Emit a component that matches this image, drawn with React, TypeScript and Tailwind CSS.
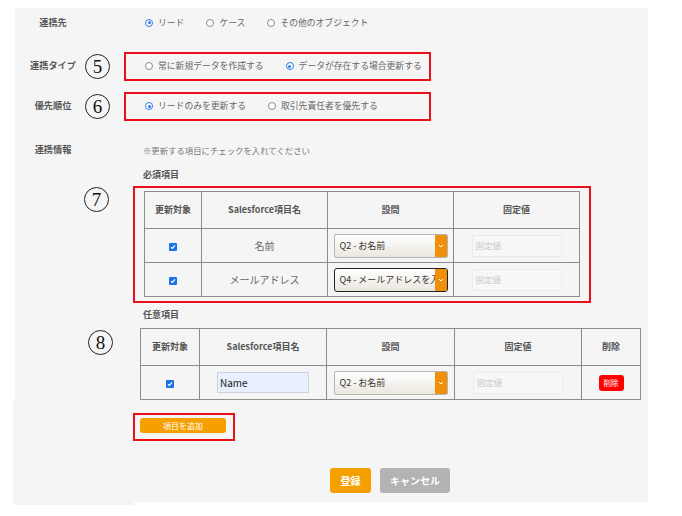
import React from "react";

function Radio({ checked }: { checked?: boolean }) {
  return checked ? (
    <span className="w-[8px] h-[8px] rounded-full border-[1.5px] border-[#2a7be4] bg-white flex items-center justify-center shrink-0">
      <span className="w-[3px] h-[3px] rounded-full bg-[#2a7be4]" />
    </span>
  ) : (
    <span className="w-[8px] h-[8px] rounded-full border border-[#8a8a8a] bg-white shrink-0" />
  );
}

function Opt({ checked, label }: { checked?: boolean; label: string }) {
  return (
    <span className="flex items-center gap-[5px] whitespace-nowrap">
      <Radio checked={checked} />
      <span>{label}</span>
    </span>
  );
}

function Num({ n }: { n: string }) {
  return (
    <div className="w-[25px] h-[25px] rounded-full border-[1.5px] border-[#222] flex items-center justify-center font-['Liberation_Serif',serif] text-[19px] leading-none text-[#111]">
      {n}
    </div>
  );
}

function Check() {
  return (
    <span className="w-[8px] h-[8px] rounded-[1px] bg-[#1a73e8] inline-flex items-center justify-center">
      <svg width="6" height="6" viewBox="0 0 6 6">
        <path d="M1 3.2 L2.4 4.5 L5 1.4" stroke="white" strokeWidth="1.2" fill="none" />
      </svg>
    </span>
  );
}

function Sel({ text, focused }: { text: string; focused?: boolean }) {
  return (
    <div
      className={
        focused
          ? "mx-auto w-[114px] h-[24px] rounded-[3px] border-[1.5px] border-[#222] bg-linear-to-b from-white to-[#ebe7df] flex items-stretch overflow-hidden"
          : "mx-auto w-[114px] h-[24px] rounded-[2px] border border-[#b5b5b5] bg-linear-to-b from-white to-[#ebe7df] flex items-stretch overflow-hidden"
      }
    >
      <span className="flex-1 min-w-0 flex items-center pl-[5px] text-[9px] text-[#333] whitespace-nowrap overflow-hidden">
        {text}
      </span>
      <span className="w-[12px] bg-[#f0900a] flex items-center justify-center shrink-0">
        <svg width="6" height="4" viewBox="0 0 6 4">
          <path d="M1 1 L3 3 L5 1" stroke="white" strokeWidth="1" fill="none" />
        </svg>
      </span>
    </div>
  );
}

function Fixed() {
  return (
    <div className="mx-auto w-[90px] h-[22px] bg-[#f7f7f7] border border-[#ebebeb] flex items-center pl-[3px] text-[8.5px] text-[#c8c8c8]">
      固定値
    </div>
  );
}

const th = "border border-[#8c8c8c] text-[9px] font-bold text-[#555] text-center align-middle";
const td = "border border-[#8c8c8c] text-[10px] text-[#666] text-center align-middle";

export default function App() {
  return (
    <div className="w-[682px] h-[516px] bg-white pt-[8px] pl-[15px] font-['Noto_Sans_CJK_JP','Noto_Sans',sans-serif] overflow-hidden">
      <div className="w-[633px] h-[392px] bg-[#f5f5f5] flex flex-col">
        {/* row 1 */}
        <div className="h-[30px] flex items-center">
          <div className="ml-[8px] w-[60px] text-center text-[9.2px] font-bold text-[#555]">連携先</div>
          <div className="w-[41px]" />
          <div className="pl-[21px] flex items-center gap-[22px] text-[8.8px] text-[#666]">
            <Opt checked label="リード" />
            <Opt label="ケース" />
            <Opt label="その他のオブジェクト" />
          </div>
        </div>
        {/* row 2 */}
        <div className="mt-[14px] h-[29px] flex items-center">
          <div className="ml-[8px] w-[60px] text-center text-[9.2px] font-bold text-[#555]">連携タイプ</div>
          <div className="w-[41px] pl-[2px]">
            <Num n="5" />
          </div>
          <div className="w-[307px] h-[29px] border-2 border-[#e8101a] pl-[19px] flex items-center gap-[22px] text-[8.8px] text-[#666]">
            <Opt label="常に新規データを作成する" />
            <Opt checked label="データが存在する場合更新する" />
          </div>
        </div>
        {/* row 3 */}
        <div className="mt-[11px] h-[29px] flex items-center">
          <div className="ml-[8px] w-[60px] text-center text-[9.2px] font-bold text-[#555]">優先順位</div>
          <div className="w-[41px] pl-[2px]">
            <Num n="6" />
          </div>
          <div className="w-[307px] h-[29px] border-2 border-[#e8101a] pl-[19px] flex items-center gap-[22px] text-[8.8px] text-[#666]">
            <Opt checked label="リードのみを更新する" />
            <Opt label="取引先責任者を優先する" />
          </div>
        </div>
        {/* row 4 */}
        <div className="mt-[19px] h-[22px] flex items-center">
          <div className="ml-[8px] w-[60px] text-center text-[9.2px] font-bold text-[#555]">連携情報</div>
          <div className="w-[41px]" />
          <div className="pl-[19px] text-[8.4px] text-[#777] whitespace-nowrap">※更新する項目にチェックを入れてください</div>
        </div>
        {/* 必須項目 */}
        <div className="mt-[7px] h-[14px] ml-[128px] flex items-center text-[9px] font-bold text-[#555]">必須項目</div>
        <div className="mt-[4px] flex items-start">
          <div className="ml-[69px] mt-[1px]">
            <Num n="7" />
          </div>
          <div className="ml-[24px] w-[458px] h-[117px] border-2 border-[#e8101a] pt-[3px] pl-[9px]">
            <table className="border-collapse table-fixed w-[435px]">
              <colgroup>
                <col className="w-[57px]" />
                <col className="w-[126px]" />
                <col className="w-[126px]" />
                <col className="w-[126px]" />
              </colgroup>
              <tbody>
                <tr className="h-[37px]">
                  <td className={th}>更新対象</td>
                  <td className={th}>Salesforce項目名</td>
                  <td className={th}>設問</td>
                  <td className={th}>固定値</td>
                </tr>
                <tr className="h-[34px]">
                  <td className={td}><Check /></td>
                  <td className={td}>名前</td>
                  <td className={td}><Sel text="Q2 - お名前" /></td>
                  <td className={td}><Fixed /></td>
                </tr>
                <tr className="h-[34px]">
                  <td className={td}><Check /></td>
                  <td className={td}>メールアドレス</td>
                  <td className={td}><Sel text="Q4 - メールアドレスを入" focused /></td>
                  <td className={td}><Fixed /></td>
                </tr>
              </tbody>
            </table>
          </div>
        </div>
        {/* 任意項目 */}
        <div className="mt-[6px] h-[12px] ml-[128px] flex items-center text-[9px] font-bold text-[#555]">任意項目</div>
        <div className="mt-[7px] flex items-start">
          <div className="ml-[73px] mt-[2px]">
            <Num n="8" />
          </div>
          <table className="ml-[27px] border-collapse table-fixed w-[500px]">
            <colgroup>
              <col className="w-[59px]" />
              <col className="w-[127px]" />
              <col className="w-[128px]" />
              <col className="w-[127px]" />
              <col className="w-[59px]" />
            </colgroup>
            <tbody>
              <tr className="h-[37px]">
                <td className={th}>更新対象</td>
                <td className={th}>Salesforce項目名</td>
                <td className={th}>設問</td>
                <td className={th}>固定値</td>
                <td className={th}>削除</td>
              </tr>
              <tr className="h-[34px]">
                <td className={td}><Check /></td>
                <td className={td}>
                  <div className="mx-auto w-[92px] h-[21px] bg-[#e8f0fe] border border-[#c9d3df] flex items-center pl-[2px] text-[10px] text-[#222]">
                    Name
                  </div>
                </td>
                <td className={td}><Sel text="Q2 - お名前" /></td>
                <td className={td}><Fixed /></td>
                <td className={td}>
                  <span className="inline-flex w-[25px] h-[16px] rounded-[3px] bg-[#ff0000] text-white text-[7.5px] items-center justify-center">削除</span>
                </td>
              </tr>
            </tbody>
          </table>
        </div>
      </div>
      {/* bottom strip */}
      <div className="flex items-start">
        <div className="-ml-[2px] w-[121px] h-[105px] bg-[#f5f5f5]" />
        <div className="w-[514px] h-[102px] bg-[#f5f5f5] flex flex-col">
          <div className="-ml-[1px] mt-[13px] w-[102px] h-[28px] border-2 border-[#e8101a] pt-[3px] pl-[5px]">
            <div className="w-[86px] h-[15px] rounded-[3px] bg-[#f5a000] text-white text-[8px] flex items-center justify-center">
              項目を追加
            </div>
          </div>
          <div className="mt-[27px] ml-[196px] flex gap-[9px]">
            <div className="w-[41px] h-[25px] rounded-[3px] bg-[#f5a000] text-white text-[10px] font-bold flex items-center justify-center">
              登録
            </div>
            <div className="w-[70px] h-[25px] rounded-[3px] bg-[#b3b3b3] text-white text-[10px] font-bold flex items-center justify-center">
              キャンセル
            </div>
          </div>
        </div>
      </div>
    </div>
  );
}
